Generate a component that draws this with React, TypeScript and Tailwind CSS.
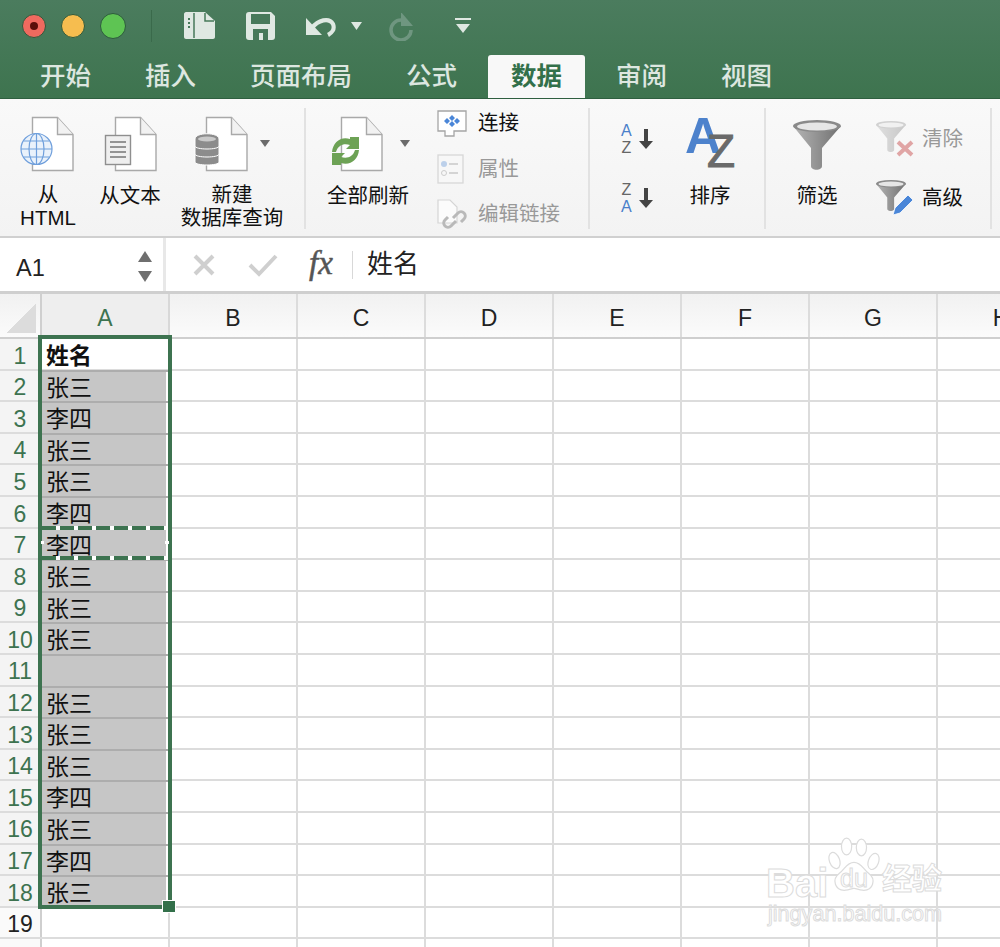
const cjk = "font-['Liberation_Sans','Noto_Sans_CJK_SC',sans-serif]";

const rowData = ["姓名", "张三", "李四", "张三", "张三", "李四", "李四", "张三", "张三", "张三", "", "张三", "张三", "张三", "李四", "张三", "李四", "张三"];
const tabs = ["开始", "插入", "页面布局", "公式", "数据", "审阅", "视图"];
const cols = ["B", "C", "D", "E", "F", "G", "H"];

function Caret({ x, y, w = 10, h = 7, fill = "#6b6b6b" }: { x: number; y: number; w?: number; h?: number; fill?: string }) {
  return <path d={`M${x} ${y}h${w}l-${w / 2} ${h}z`} fill={fill} />;
}

function Page({ x }: { x: number }) {
  return (
    <g>
      <path d={`M${x + .5} 117.5h25l15.5 17v36h-40.5z`} fill="#fff" stroke="#a9a9a9" strokeWidth="1.4" />
      <path d={`M${x + 25.5} 117.5v17h15.5`} fill="#f2f2f2" stroke="#a9a9a9" strokeWidth="1.4" />
    </g>
  );
}

function HtmlIcon() {
  return (
    <svg width="70" height="58" viewBox="13 115 70 58">
      <Page x={32} />
      <g fill="none" stroke="#6f9fdc" strokeWidth="1.2">
        <circle cx="36.5" cy="149" r="15.5" fill="#eaf2fb" />
        <ellipse cx="36.5" cy="149" rx="7.5" ry="15.5" />
        <path d="M21 149h31M23.5 141h26M23.5 157h26M36.5 133.5v31" />
      </g>
    </svg>
  );
}

function TextIcon() {
  return (
    <svg width="60" height="58" viewBox="100 115 60 58">
      <Page x={115} />
      <rect x="105.5" y="135.500" width="25" height="29" fill="#efefef" stroke="#8f8f8f" strokeWidth="1.4" />
      <path d="M110 142h16M110 147h16M110 152h16M110 157h16" stroke="#777" strokeWidth="1.5" />
    </svg>
  );
}

function DbIcon() {
  return (
    <svg width="80" height="58" viewBox="192 115 80 58">
      <Page x={206} />
      <g fill="#8c8c8c" stroke="#fff" strokeWidth="1">
        <path d="M195 155c0-3 24-3 24 0v7c0 4-24 4-24 0z" />
        <path d="M195 147c0-3 24-3 24 0v7c0 4-24 4-24 0z" />
        <path d="M195 139c0-7 24-7 24 0v7c0 4-24 4-24 0z" />
      </g>
      <ellipse cx="207" cy="139" rx="9" ry="2.500" fill="#c9c9c9" />
      <Caret x={260} y={140} />
    </svg>
  );
}

function RefreshIcon() {
  const arrow = "M332 152c1-10 9-16 18-13v-2h9v12h-13l4-4c-6-2-12 0-14 7z";
  return (
    <svg width="84" height="58" viewBox="326 115 84 58">
      <Page x={341} />
      <g fill="#6da255">
        <path d={arrow} />
        <path d={arrow} transform="rotate(180 345.500 151)" />
      </g>
      <Caret x={400} y={140} />
    </svg>
  );
}

function ConnectIcon() {
  return (
    <svg width="30" height="28" viewBox="0 0 30 28">
      <path d="M1 1h28v20H17v5H8v-5H1z" fill="#fff" stroke="#a5a5a5" strokeWidth="1.300" />
      <path d="M15 5l3 3-3 3-3-3zM15 11l3 3-3 3-3-3zM10 8l3 3-3 3-3-3zM20 8l3 3-3 3-3-3z" fill="#4a86d8" />
    </svg>
  );
}

function PropsIcon() {
  return (
    <svg width="28" height="30" viewBox="0 0 28 30">
      <rect x="1" y="1" width="25" height="28" fill="#f7f7f7" stroke="#d8d8d8" strokeWidth="1.300" />
      <circle cx="7" cy="10" r="3" fill="#bcd0ea" />
      <circle cx="7" cy="19" r="2.500" fill="none" stroke="#ccc" />
      <path d="M12 10h9M12 19h9" stroke="#c9c9c9" strokeWidth="1.500" />
    </svg>
  );
}

function LinkIcon() {
  return (
    <svg width="32" height="32" viewBox="0 0 32 32">
      <path d="M1 1h12l7 7v16H1z" fill="#fbfbfb" stroke="#d5d5d5" strokeWidth="1.200" />
      <g fill="none" stroke="#b9b9b9" strokeWidth="3">
        <path d="M16 19l5-5a4 4 0 0 1 6 6l-3 3" />
        <path d="M19 22l-5 5a4 4 0 0 1-6-6l3-3" />
      </g>
    </svg>
  );
}

function SortSmall({ top, bottom, topBlue }: { top: string; bottom: string; topBlue: boolean }) {
  return (
    <div className="flex items-center gap-[7px]">
      <div className="flex flex-col items-center font-['Liberation_Sans',sans-serif] text-[16px] leading-[17px]">
        <span className={topBlue ? "text-[#4a7fca]" : "text-[#666]"}>{top}</span>
        <span className={topBlue ? "text-[#666]" : "text-[#4a7fca]"}>{bottom}</span>
      </div>
      <svg width="14" height="20" viewBox="0 0 14 20">
        <path d="M5 0h4v12h5l-7 8-7-8h5z" fill="#444" />
      </svg>
    </div>
  );
}

function SortBig() {
  return (
    <svg className="overflow-visible" width="50" height="52" viewBox="0 0 50 52">
      <text x="0" y="38" fontFamily="Liberation Sans" fontWeight="700" fontSize="50" fill="#4d82cc">A</text>
      <text x="22" y="52" fontFamily="Liberation Sans" fontWeight="400" fontSize="46" stroke="#6a6a6a" strokeWidth="1" fill="#6a6a6a">Z</text>
    </svg>
  );
}

function Funnel({ size, faded }: { size: number; faded?: boolean }) {
  return (
    <svg width={size} height={size * 1.04} viewBox="0 0 48 50" opacity={faded ? 0.35 : 1}>
      <defs>
        <linearGradient id="fn" x1="0" x2="1">
          <stop offset="0" stopColor="#b5b5b5" />
          <stop offset="1" stopColor="#707070" />
        </linearGradient>
      </defs>
      <path d="M0 6l18 22v18c0 5 11 5 11 0V28L48 6z" fill="url(#fn)" />
      <ellipse cx="24" cy="6" rx="24" ry="6" fill="#8a8a8a" />
      <ellipse cx="24" cy="6.500" rx="20" ry="4" fill="#e6e6e6" />
    </svg>
  );
}

function ClearIcon() {
  return (
    <div className="relative w-[38px] h-[36px]">
      <Funnel size={30} faded />
      <svg className="absolute right-0 bottom-0" width="18" height="17" viewBox="0 0 18 17">
        <path d="M2 2l14 13M16 2L2 15" stroke="#e0a5a5" strokeWidth="4" />
      </svg>
    </div>
  );
}

function AdvancedIcon() {
  return (
    <div className="relative w-[38px] h-[36px]">
      <Funnel size={30} />
      <svg className="absolute right-0 bottom-0" width="22" height="22" viewBox="0 0 22 22">
        <path d="M16 1l5 5L8 19l-7 2 2-7z" fill="#4a86d8" stroke="#fff" strokeWidth=".8" />
      </svg>
    </div>
  );
}

function TitleBar() {
  return (
    <div className="flex items-center h-[55px] pl-[22px] pb-[4px]">
      <div className="w-[24px] h-[24px] rounded-full bg-[#ef6a5f] border border-[#2d5a3d] flex items-center justify-center">
        <div className="w-[8px] h-[8px] rounded-full bg-[#5a0f0a]" />
      </div>
      <div className="ml-[15px] w-[24px] h-[24px] rounded-full bg-[#f6bd4f] border border-[#2d5a3d]" />
      <div className="ml-[15px] w-[26px] h-[26px] rounded-full bg-[#5ec453] border border-[#2d5a3d]" />
      <div className="ml-[25px] w-[1px] h-[32px] bg-[#3a6a4b]" />
      <svg className="ml-[31px]" width="33" height="29" viewBox="0 0 33 29">
        <path d="M3 1h19l10 9v16c0 1-1 2-2 2H3c-1 0-2-1-2-2V3c0-1 1-2 2-2z" fill="#dfe8e2" />
        <path d="M11 2v25" stroke="#47795a" strokeWidth="1.500" />
        <path d="M22 2v8h9" fill="none" stroke="#47795a" strokeWidth="1.500" />
        <path d="M5 8h2M5 12h2M5 16h2" stroke="#47795a" strokeWidth="2" />
      </svg>
      <svg className="ml-[30px]" width="29" height="28" viewBox="0 0 29 28">
        <path d="M3 0h22l4 4v21c0 2-1 3-3 3H3c-2 0-3-1-3-3V3c0-2 1-3 3-3z" fill="#dfe8e2" />
        <rect x="5" y="2" width="19" height="10" fill="#47795a" />
        <path d="M7 28V17h15v11h-5v-7h-4v7z" fill="#47795a" />
      </svg>
      <svg className="ml-[31px] mt-[2px]" width="31" height="20" viewBox="0 0 31 20">
        <path d="M0 1v17h16z" fill="#dfe8e2" />
        <path d="M6 11C12 3 23 0 27 7c2 5-1 9-5 11" fill="none" stroke="#dfe8e2" strokeWidth="4.200" />
      </svg>
      <svg className="ml-[14px]" width="11" height="8" viewBox="0 0 11 8">
        <path d="M0 0h11l-5.500 8z" fill="#dfe8e2" />
      </svg>
      <svg className="ml-[27px] mt-[2px]" width="26" height="28" viewBox="0 0 26 28">
        <path d="M12 0v14L24 14z" fill="#6f9680" transform="translate(0 -1)" />
        <path d="M13 7a10 10 0 1 0 10 10" transform="translate(-1 0)" fill="none" stroke="#6f9680" strokeWidth="3.500" />
      </svg>
      <svg className="ml-[40px]" width="16" height="16" viewBox="0 0 16 16">
        <path d="M0 0h16v2H0zM1 6h14l-7 9z" fill="#dfe8e2" />
      </svg>
    </div>
  );
}

function TabRow() {
  return (
    <div className={`flex items-end h-[43px] pl-[40px] gap-[54px] text-[25.500px] leading-[43px] font-medium ${cjk}`}>
      {tabs.map((t) =>
        t === "数据" ? (
          <div key={t} className="-mx-[23px] px-[23px] bg-[#f8f8f8] text-[#33704a] rounded-t-[3px] font-bold">{t}</div>
        ) : (
          <div key={t} className="text-[#dde7e0]">{t}</div>
        ),
      )}
    </div>
  );
}

function BigButton({ width, label, icon }: { width: number; label: React.ReactNode; icon: React.ReactNode }) {
  return (
    <div className="flex flex-col items-center shrink-0" style={{ width }}>
      <div className="h-[76px] pt-[7px] flex justify-center">{icon}</div>
      <div className="text-center text-[20.500px] leading-[23px] text-[#111]">{label}</div>
    </div>
  );
}

function SmallButton({ icon, label, gray }: { icon: React.ReactNode; label: string; gray?: boolean }) {
  return (
    <div className="flex items-center h-[45.500px]">
      <div className="w-[41px] flex justify-start">{icon}</div>
      <span className={`text-[20.500px] ${gray ? "text-[#999]" : "text-[#111]"}`}>{label}</span>
    </div>
  );
}

function Ribbon() {
  return (
    <div className={`flex h-[139px] pt-[9px] bg-[linear-gradient(#f9f9f9,#f3f3f3)] border-b-2 border-[#d0d0d0] ${cjk}`}>
      <div className="flex w-[306px] h-[121px] border-r-2 border-[#e2e2e2]">
        <BigButton width={96} icon={<HtmlIcon />} label={<>从<br />HTML</>} />
        <BigButton width={68} icon={<TextIcon />} label="从文本" />
        <BigButton width={136} icon={<DbIcon />} label={<>新建<br />数据库查询</>} />
      </div>
      <div className="flex w-[284px] h-[121px] border-r-2 border-[#e2e2e2]">
        <BigButton width={124} icon={<RefreshIcon />} label="全部刷新" />
        <div className="ml-[7px] -mt-[9px] pt-[2px]">
          <SmallButton icon={<ConnectIcon />} label="连接" />
          <SmallButton icon={<PropsIcon />} label="属性" gray />
          <SmallButton icon={<LinkIcon />} label="编辑链接" gray />
        </div>
      </div>
      <div className="flex w-[176px] h-[121px] border-r-2 border-[#e2e2e2]">
        <div className="ml-[31px] w-[64px] flex flex-col gap-[25px] pt-[14px]">
          <SortSmall top="A" bottom="Z" topBlue />
          <SortSmall top="Z" bottom="A" topBlue={false} />
        </div>
        <BigButton width={50} icon={<SortBig />} label="排序" />
      </div>
      <div className="flex w-[226px] h-[121px] border-r-2 border-[#e2e2e2]">
        <BigButton width={102} icon={<div className="pt-[5px]"><Funnel size={48} /></div>} label="筛选" />
        <div className="ml-[8px] flex flex-col gap-[23px] pt-[13px]">
          <div className="flex items-center gap-[8px]"><ClearIcon /><span className="text-[20.500px] text-[#999]">清除</span></div>
          <div className="flex items-center gap-[8px]"><AdvancedIcon /><span className="text-[20.500px] text-[#111]">高级</span></div>
        </div>
      </div>
    </div>
  );
}

function FormulaBar() {
  return (
    <div className={`flex h-[56px] bg-white border-b-[3px] border-[#cfcfcf] ${cjk}`}>
      <div className="flex items-center w-[166px] pl-[16px] pr-[11px] justify-between border-r-[3px] border-[#e8e8e8]">
        <span className="text-[23.500px] text-[#222] mt-[8px]">A1</span>
        <div className="flex flex-col gap-[9px] mt-[3px]">
          <svg width="14" height="11" viewBox="0 0 14 11"><path d="M7 0l7 11H0z" fill="#6f6f6f" /></svg>
          <svg width="14" height="11" viewBox="0 0 14 11"><path d="M7 11L0 0h14z" fill="#6f6f6f" /></svg>
        </div>
      </div>
      <div className="flex items-center pl-[26px] flex-1">
        <svg width="24" height="24" viewBox="0 0 24 24"><path d="M3 3l18 18M21 3L3 21" stroke="#cfcfcf" strokeWidth="4" /></svg>
        <svg className="ml-[32px]" width="30" height="24" viewBox="0 0 30 24"><path d="M2 12l9 9L28 3" fill="none" stroke="#cfcfcf" strokeWidth="4" /></svg>
        <span className="ml-[31px] w-[31px] font-['Liberation_Serif',serif] italic text-[33px] leading-none text-[#555] -mt-[2px] [-webkit-text-stroke:0.5px_#555]">fx</span>
        <div className="ml-[12px] w-[1px] h-[28px] bg-[#d8d8d8]" />
        <span className="ml-[14px] text-[26px] text-[#222]">姓名</span>
      </div>
    </div>
  );
}

function HeaderRow() {
  return (
    <div className={`flex h-[45px] border-b-2 border-[#cfcfcf] bg-[linear-gradient(#f1f1f1,#fbfbfb)] font-['Liberation_Sans',sans-serif] text-[23px] text-[#222]`}>
      <div className="w-[42px] shrink-0 border-r-2 border-[#cfcfcf] pt-[10px] pl-[6px]">
        <div className="w-[30px] h-[29px] bg-[linear-gradient(to_bottom_right,transparent_50%,#dcdcdc_50%)]" />
      </div>
      <div className="w-[128px] shrink-0 pt-[6px] border-r-2 border-[#d8d8d8] bg-[#eeeeee] text-[#3d7350] flex items-center justify-center">A</div>
      {cols.map((c) => (
        <div key={c} className="w-[128px] shrink-0 pt-[6px] border-r-2 border-[#dcdcdc] flex items-center justify-center">{c}</div>
      ))}
    </div>
  );
}

function Row({ n, value }: { n: number; value: string }) {
  const selected = n >= 1 && n <= 18;
  const first = n === 1;
  return (
    <div className="flex h-[31.600px] border-b-2 border-[#dcdcdc]">
      <div className={`w-[42px] shrink-0 pt-[4px] border-r-2 border-[#cfcfcf] flex items-center justify-center font-['Liberation_Sans',sans-serif] text-[23px] ${selected ? "bg-[#f4f4f4] text-[#3d7350]" : "bg-[#fafafa] text-[#222]"}`}>
        {n}
      </div>
      <div className={`w-[128px] shrink-0 pt-[5px] border-r-2 border-[#dcdcdc] pl-[4px] flex items-center text-[23px] text-[#111] ${selected && !first ? "-my-[1px] bg-[#c6c6c6] shadow-[inset_0_2px_0_#adadad,inset_-2px_0_0_#fff]" : ""} ${first ? "font-bold" : ""}`}>
        {value}
      </div>
      {cols.map((c) => (
        <div key={c} className="w-[128px] shrink-0 border-r-2 border-[#dcdcdc]" />
      ))}
    </div>
  );
}

function Sheet() {
  return (
    <div className={`relative ${cjk}`}>
      <HeaderRow />
      {rowData.map((v, i) => (
        <Row key={i} n={i + 1} value={v} />
      ))}
      <Row n={19} value="" />
      <Row n={20} value="" />

      {/* selection */}
      <div className="absolute left-[38px] top-[41px] w-[134px] h-[574px] border-4 border-[#3d7350] pointer-events-none" />
      <div className="absolute left-[162px] top-[606px] w-[14px] h-[13px] bg-[#33704a] border border-white" />

      {/* copy marquee on row 7 */}
      <div className="absolute left-[42px] top-[232px] w-[126px] h-[4px] bg-[repeating-linear-gradient(90deg,#3d7350_0_14px,#fff_14px_18px)]" />
      <div className="absolute left-[42px] top-[262px] w-[126px] h-[4px] bg-[repeating-linear-gradient(90deg,#3d7350_0_14px,#fff_14px_18px)]" />
      <div className="absolute left-[165px] top-[247px] w-[4px] h-[3px] bg-white" />
      <div className="absolute left-[41px] top-[247px] w-[3px] h-[3px] bg-white" />

      {/* watermark */}
      <div className="absolute left-[766px] top-[535px] w-[190px] h-[112px] pointer-events-none">
        <span className="absolute left-0 top-[34px] font-['Liberation_Sans',sans-serif] font-bold text-[40px] leading-none text-white [-webkit-text-stroke:1px_#dcdcdc]">Bai</span>
        <svg className="absolute left-[62px] top-[8px]" width="52" height="60" viewBox="0 0 56 64">
          <g fill="#fff" stroke="#dcdcdc" strokeWidth="1.300">
            <ellipse cx="20" cy="10" rx="5.500" ry="9" />
            <ellipse cx="36" cy="11" rx="5.500" ry="9" />
            <ellipse cx="7" cy="25" rx="5.500" ry="9" transform="rotate(-20 7 25)" />
            <ellipse cx="49" cy="26" rx="5.500" ry="9" transform="rotate(20 49 26)" />
            <path d="M28 27c8 0 10 8 16 12 8 6 5 19-7 18-4 0-6-2-9-2s-5 2-9 2c-12 1-15-12-7-18 6-4 8-12 16-12z" />
          </g>
        </svg>
        <span className="absolute left-[74px] top-[37px] font-['Liberation_Sans',sans-serif] text-[25px] leading-none text-white [-webkit-text-stroke:1px_#dcdcdc]">du</span>
        <span className="absolute left-[116px] top-[35px] font-bold text-[30px] leading-none text-white [-webkit-text-stroke:1px_#dcdcdc]">经验</span>
        <span className="absolute left-[2px] top-[74px] font-['Liberation_Sans',sans-serif] text-[21.600px] leading-none text-white [-webkit-text-stroke:1px_#dcdcdc]">jingyan.baidu.com</span>
      </div>
    </div>
  );
}

export default function App() {
  return (
    <div className="w-[1000px] h-[947px] overflow-hidden bg-white">
      <div className={`bg-[linear-gradient(#4b7c5e,#3e744f)] border-b border-[#2f5f40] ${cjk}`}>
        <TitleBar />
        <TabRow />
      </div>
      <Ribbon />
      <FormulaBar />
      <Sheet />
    </div>
  );
}
